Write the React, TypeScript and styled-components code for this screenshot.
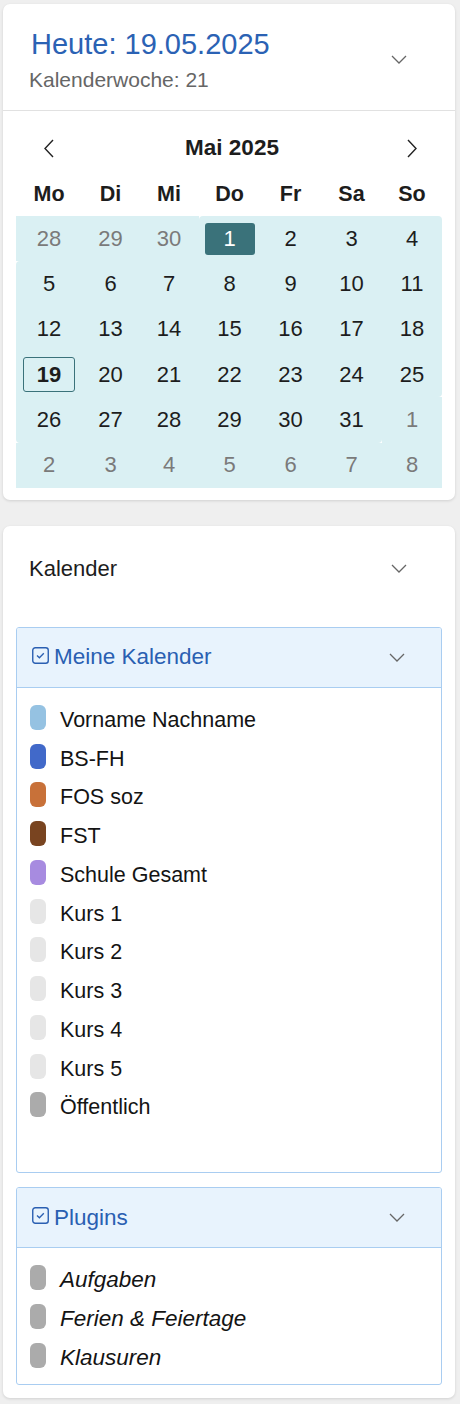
import React from "react";
import styled, { createGlobalStyle } from "styled-components";

const GlobalStyle = createGlobalStyle`
  html, body { margin: 0; padding: 0; background: #efefef; }
  body { font-family: "Liberation Sans", Arial, Helvetica, sans-serif; color: #1d1d1d; }
  * { box-sizing: border-box; }
`;

const Page = styled.div`
  width: 460px;
  padding: 4px 5px 6px 3px;
  display: flex;
  flex-direction: column;
  gap: 26px;
`;

const Card = styled.section`
  background: #fff;
  border-radius: 7px;
  box-shadow: 0 1px 3px rgba(0, 0, 0, 0.13);
  overflow: hidden;
`;

const TodayHeader = styled.div`
  display: flex;
  align-items: center;
  justify-content: space-between;
  padding: 23px 48px 18px 26px;
  border-bottom: 1px solid #e1e1e1;
`;

const TitleBlock = styled.div`
  display: flex;
  flex-direction: column;
  gap: 7px;
`;

const TodayTitle = styled.div`
  font-size: 29px;
  line-height: 34px;
  color: #2b62b4;
  padding-left: 2px;
`;

const WeekLabel = styled.div`
  font-size: 21px;
  line-height: 24px;
  color: #666;
`;

const Calendar = styled.div`
  padding: 19px 13px 12px;
  display: flex;
  flex-direction: column;
`;

const cols = "66px 57px 60px 61px 61px 61px 60px";

const NavRow = styled.div`
  display: grid;
  grid-template-columns: ${cols};
  height: 36px;
  align-items: center;
`;

const NavButton = styled.div`
  display: flex;
  justify-content: center;
  align-items: center;
`;

const MonthTitle = styled.div`
  grid-column: 2 / 7;
  text-align: center;
  font-weight: bold;
  font-size: 22.5px;
  line-height: 36px;
  color: #1d1d1d;
`;

const WeekdayRow = styled.div`
  display: grid;
  grid-template-columns: ${cols};
  height: 44px;
  margin-top: 6px;
  align-items: center;
`;

const Weekday = styled.div`
  text-align: center;
  font-weight: bold;
  font-size: 21.5px;
  line-height: 44px;
  color: #1d1d1d;
`;

const DayGrid = styled.div`
  display: grid;
  grid-template-columns: ${cols};
  grid-template-rows: repeat(6, 45.33px);
`;

const DayCell = styled.div<{ $radius: string }>`
  background: #daf0f3;
  border-radius: ${(p) => p.$radius};
  display: flex;
  align-items: center;
  justify-content: center;
`;

const DayNum = styled.div<{ $muted?: boolean; $selected?: boolean; $today?: boolean }>`
  width: ${(p) => (p.$today ? "52px" : "50px")};
  height: ${(p) => (p.$today ? "35px" : "32px")};
  display: flex;
  align-items: center;
  justify-content: center;
  font-size: 22px;
  border-radius: 3px;
  color: ${(p) => (p.$selected ? "#fff" : p.$muted ? "#7a7a7a" : "#1d1d1d")};
  background: ${(p) => (p.$selected ? "#3a727a" : "transparent")};
  border: ${(p) => (p.$today ? "1.5px solid #3a727a" : "none")};
  font-weight: ${(p) => (p.$today ? "bold" : "normal")};
`;

const CardHeader = styled.div`
  height: 86px;
  display: flex;
  align-items: center;
  justify-content: space-between;
  padding: 0 48px 0 26px;
`;

const CardTitle = styled.div`
  font-size: 22px;
  line-height: 26px;
  color: #1d1d1d;
`;

const CardBody = styled.div`
  padding: 15px 13px 13px;
  display: flex;
  flex-direction: column;
  gap: 14px;
`;

const Section = styled.div`
  border: 1px solid #a9cdf1;
  border-radius: 3px;
  overflow: hidden;
`;

const SectionHeader = styled.div`
  height: 60px;
  background: #e8f3fd;
  border-bottom: 1px solid #a9cdf1;
  display: flex;
  align-items: center;
  padding: 0 36px 0 15px;
`;

const SectionTitle = styled.div`
  flex: 1;
  display: flex;
  align-items: center;
  gap: 5px;
  font-size: 22.5px;
  line-height: 26px;
  color: #2a5fb2;
`;

const CheckIcon = styled.svg`
  margin-bottom: 4px;
  flex: none;
`;

const ItemList = styled.div<{ $extra?: number }>`
  padding: 10px 13px ${(p) => 10 + (p.$extra || 0)}px;
  display: flex;
  flex-direction: column;
`;

const Item = styled.div`
  height: 38.75px;
  display: flex;
  align-items: center;
  gap: 14px;
`;

const Swatch = styled.div<{ $color: string }>`
  width: 16px;
  height: 25px;
  border-radius: 6px;
  background: ${(p) => p.$color};
  flex: none;
`;

const ItemLabel = styled.div<{ $italic?: boolean }>`
  font-size: ${(p) => (p.$italic ? "22.5px" : "21.5px")};
  line-height: 24px;
  margin-top: 5px;
  color: #141414;
  font-style: ${(p) => (p.$italic ? "italic" : "normal")};
`;

const Chevron = () => (
  <svg width="16" height="9" viewBox="0 0 16 9">
    <polyline points="1,1 8,8 15,1" fill="none" stroke="#666" strokeWidth="1.3" />
  </svg>
);

const Arrow = ({ dir }: { dir: "left" | "right" }) => (
  <svg width="10" height="19" viewBox="0 0 10 19">
    <polyline
      points={dir === "left" ? "9,1 1,9.5 9,18" : "1,1 9,9.5 1,18"}
      fill="none"
      stroke="#222"
      strokeWidth="1.4"
    />
  </svg>
);

const Check = () => (
  <CheckIcon width="17" height="17" viewBox="0 0 17 17">
    <rect x="0.75" y="0.75" width="15.5" height="15.5" rx="2.5" fill="none" stroke="#2a5fb2" strokeWidth="1.4" />
    <polyline points="5,8.5 7.4,10.8 11.8,6.2" fill="none" stroke="#2a5fb2" strokeWidth="1.3" />
  </CheckIcon>
);

type Day = { n: number; muted?: boolean; selected?: boolean; today?: boolean; r?: string };

const R = "4px";
const days: Day[] = [
  { n: 28, muted: true }, { n: 29, muted: true }, { n: 30, muted: true },
  { n: 1, selected: true, r: `${R} 0 0 0` }, { n: 2 }, { n: 3 }, { n: 4, r: `0 ${R} 0 0` },
  { n: 5, r: `${R} 0 0 0` }, { n: 6 }, { n: 7 }, { n: 8 }, { n: 9 }, { n: 10 }, { n: 11 },
  { n: 12 }, { n: 13 }, { n: 14 }, { n: 15 }, { n: 16 }, { n: 17 }, { n: 18 },
  { n: 19, today: true }, { n: 20 }, { n: 21 }, { n: 22 }, { n: 23 }, { n: 24 }, { n: 25, r: `0 0 ${R} 0` },
  { n: 26, r: `0 0 0 ${R}` }, { n: 27 }, { n: 28 }, { n: 29 }, { n: 30 }, { n: 31, r: `0 0 ${R} 0` }, { n: 1, muted: true },
  { n: 2, muted: true }, { n: 3, muted: true }, { n: 4, muted: true }, { n: 5, muted: true },
  { n: 6, muted: true }, { n: 7, muted: true }, { n: 8, muted: true },
];

const weekdays = ["Mo", "Di", "Mi", "Do", "Fr", "Sa", "So"];

const calendars = [
  { name: "Vorname Nachname", color: "#95c2e2" },
  { name: "BS-FH", color: "#4169c9" },
  { name: "FOS soz", color: "#c87139" },
  { name: "FST", color: "#794420" },
  { name: "Schule Gesamt", color: "#a78be0" },
  { name: "Kurs 1", color: "#e6e6e6" },
  { name: "Kurs 2", color: "#e6e6e6" },
  { name: "Kurs 3", color: "#e6e6e6" },
  { name: "Kurs 4", color: "#e6e6e6" },
  { name: "Kurs 5", color: "#e6e6e6" },
  { name: "Öffentlich", color: "#ababab" },
];

const plugins = ["Aufgaben", "Ferien & Feiertage", "Klausuren"];

export default function App() {
  return (
    <>
      <GlobalStyle />
      <Page>
        <Card>
          <TodayHeader>
            <TitleBlock>
              <TodayTitle>Heute: 19.05.2025</TodayTitle>
              <WeekLabel>Kalenderwoche: 21</WeekLabel>
            </TitleBlock>
            <Chevron />
          </TodayHeader>
          <Calendar>
            <NavRow>
              <NavButton>
                <Arrow dir="left" />
              </NavButton>
              <MonthTitle>Mai 2025</MonthTitle>
              <NavButton>
                <Arrow dir="right" />
              </NavButton>
            </NavRow>
            <WeekdayRow>
              {weekdays.map((w) => (
                <Weekday key={w}>{w}</Weekday>
              ))}
            </WeekdayRow>
            <DayGrid>
              {days.map((d, i) => (
                <DayCell key={i} $radius={d.r || "0"}>
                  <DayNum $muted={d.muted} $selected={d.selected} $today={d.today}>
                    {d.n}
                  </DayNum>
                </DayCell>
              ))}
            </DayGrid>
          </Calendar>
        </Card>

        <Card>
          <CardHeader>
            <CardTitle>Kalender</CardTitle>
            <Chevron />
          </CardHeader>
          <CardBody>
            <Section>
              <SectionHeader>
                <SectionTitle>
                  <Check />
                  Meine Kalender
                </SectionTitle>
                <Chevron />
              </SectionHeader>
              <ItemList $extra={38}>
                {calendars.map((c) => (
                  <Item key={c.name}>
                    <Swatch $color={c.color} />
                    <ItemLabel>{c.name}</ItemLabel>
                  </Item>
                ))}
              </ItemList>
            </Section>
            <Section>
              <SectionHeader>
                <SectionTitle>
                  <Check />
                  Plugins
                </SectionTitle>
                <Chevron />
              </SectionHeader>
              <ItemList>
                {plugins.map((p) => (
                  <Item key={p}>
                    <Swatch $color="#ababab" />
                    <ItemLabel $italic>{p}</ItemLabel>
                  </Item>
                ))}
              </ItemList>
            </Section>
          </CardBody>
        </Card>
      </Page>
    </>
  );
}
